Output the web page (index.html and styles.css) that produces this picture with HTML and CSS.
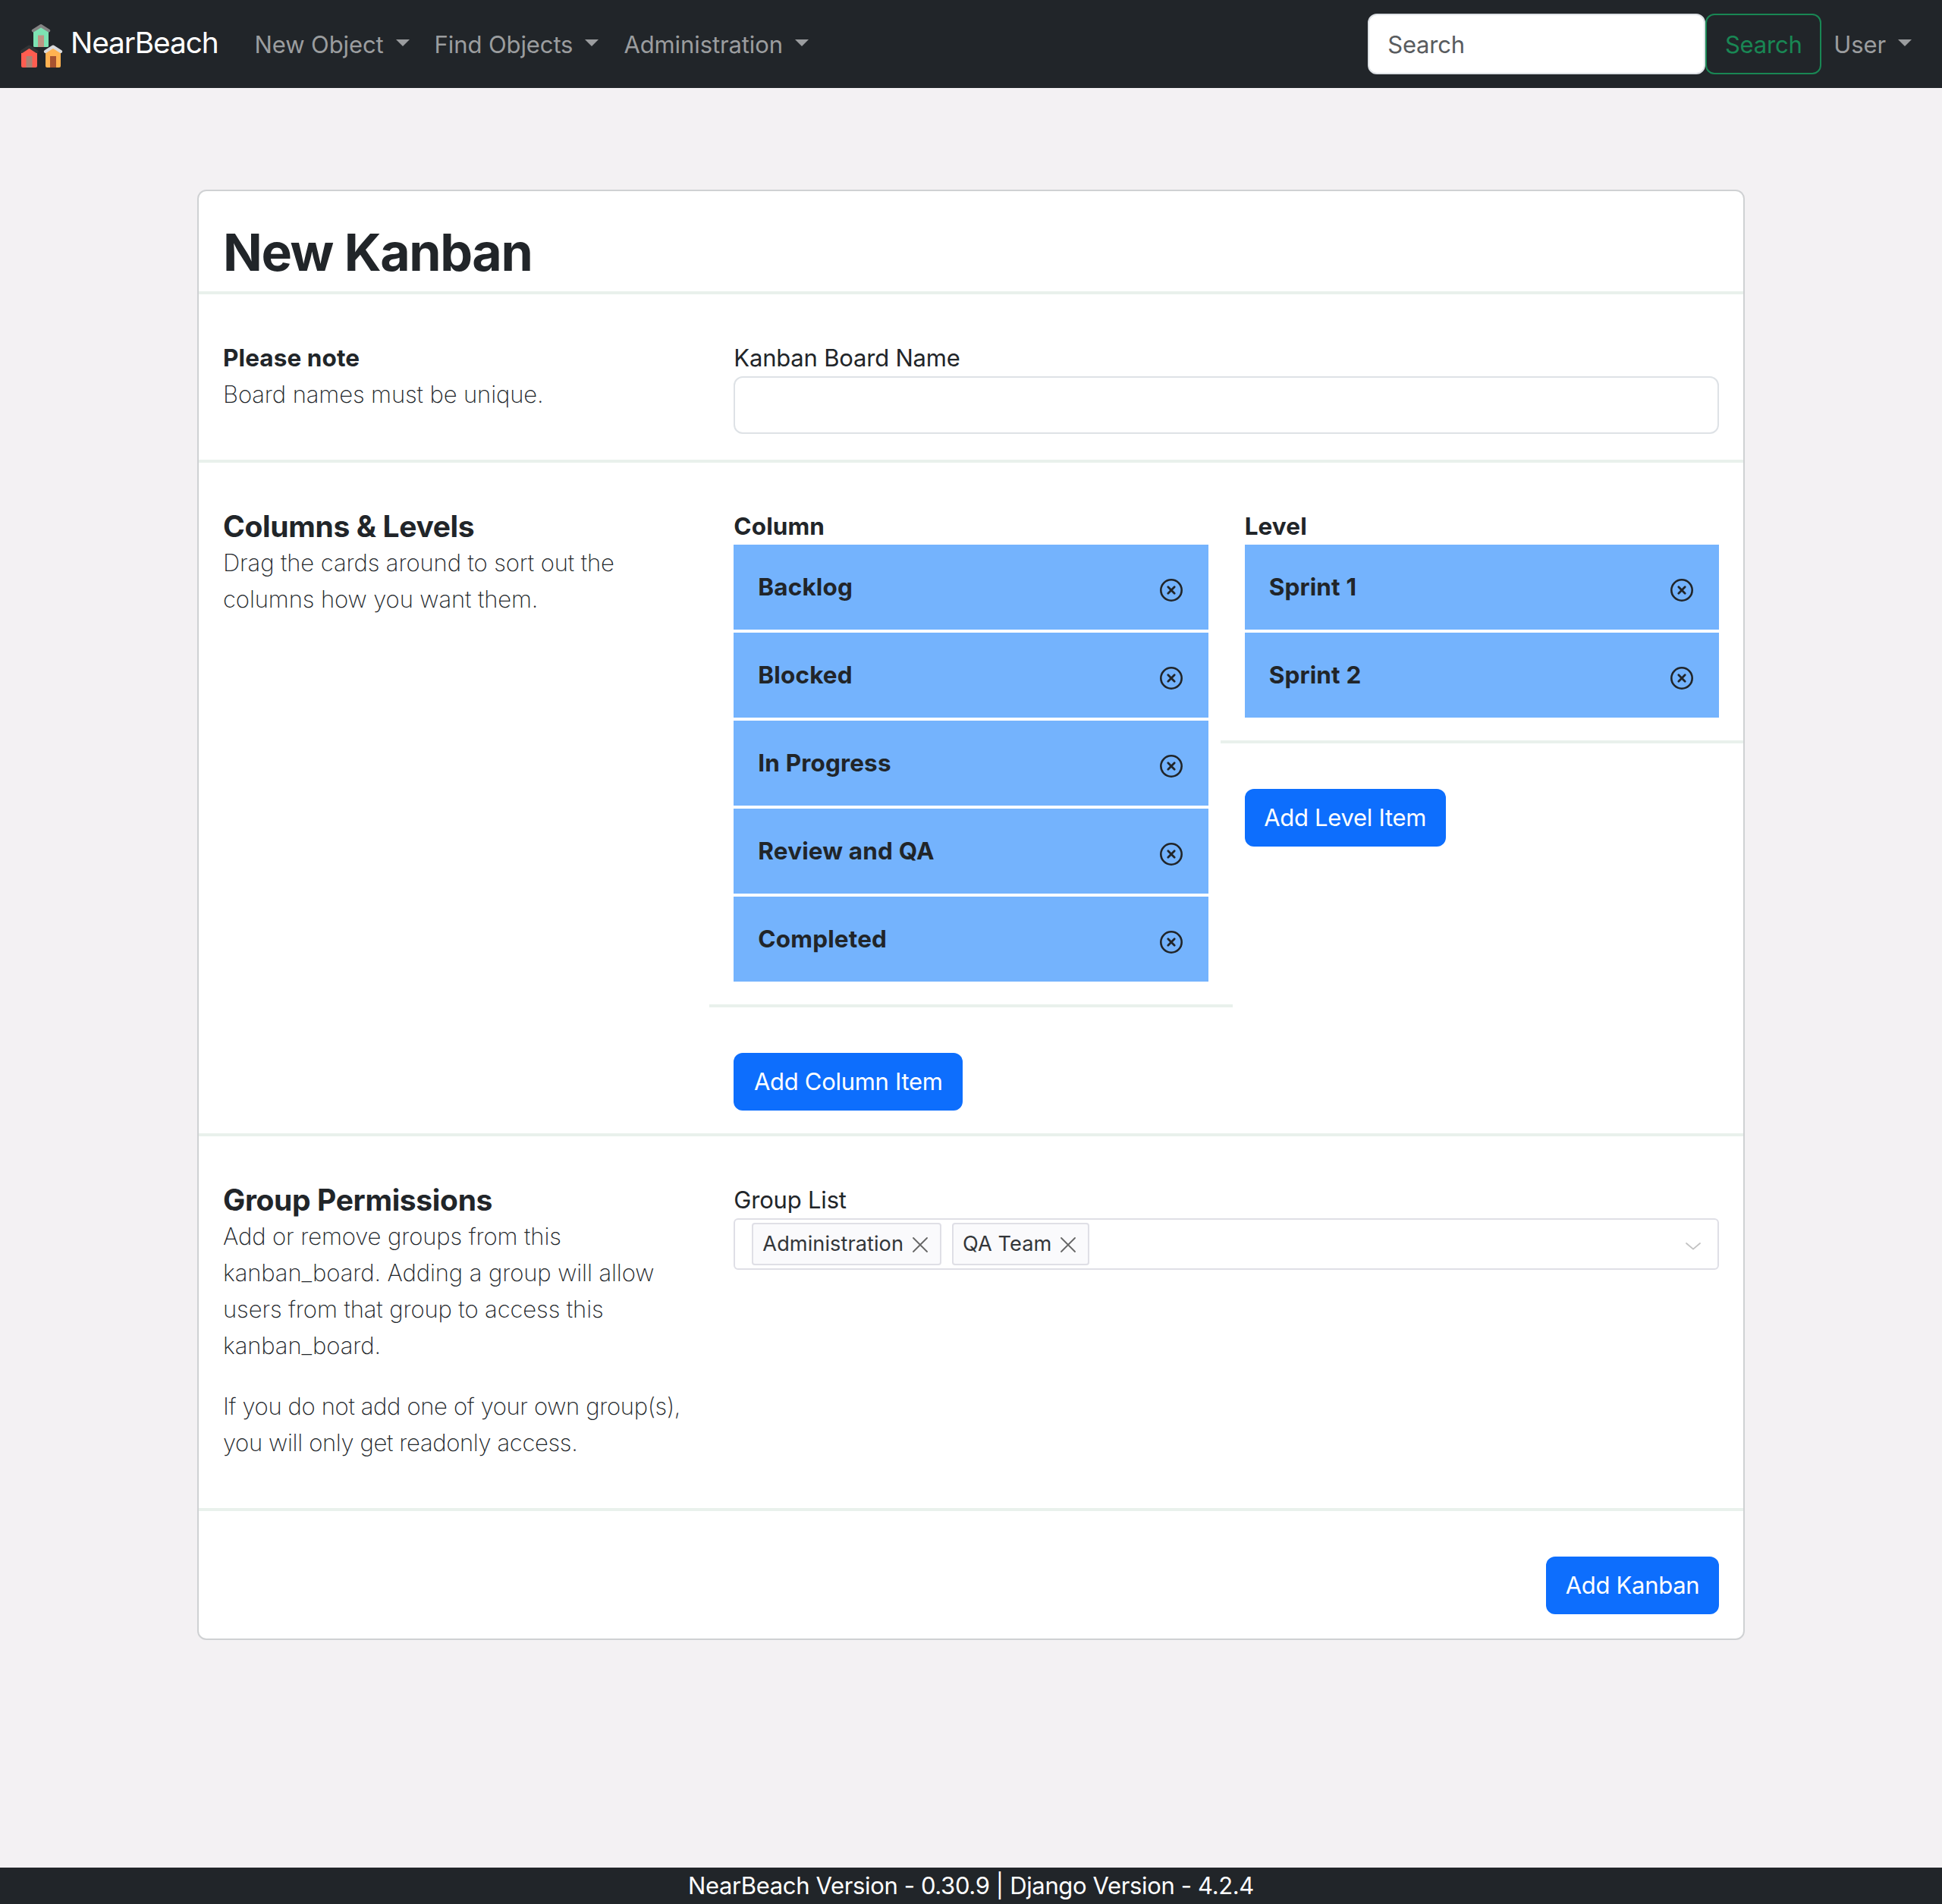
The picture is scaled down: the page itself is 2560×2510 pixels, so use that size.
FILE: index.html
```html
<!DOCTYPE html>
<html lang="en">
<head>
<meta charset="utf-8">
<title>New Kanban | NearBeach</title>
<link rel="stylesheet" href="styles.css">
</head>
<body>
<svg class="sprite" aria-hidden="true">
  <symbol id="remove" viewBox="0 0 32 32">
    <circle cx="16" cy="16" r="13.7" fill="none" stroke="currentColor" stroke-width="2.6"/>
    <path d="M11.8 11.8 20.2 20.2M20.2 11.8 11.8 20.2" fill="none" stroke="currentColor" stroke-width="2.8" stroke-linecap="round"/>
  </symbol>
  <symbol id="cross" viewBox="0 0 20 20">
    <path d="M1 1 19 19M19 1 1 19" fill="none" stroke="currentColor" stroke-width="1.8" stroke-linecap="round"/>
  </symbol>
</svg>

<header class="navbar">
  <a class="brand">
    <svg class="logo" viewBox="0 0 56 58" aria-hidden="true">
      <path d="M17 9 27 2 37 9V28.5Q37 30 35.500 30H18.500Q17 30 17 28.500Z" fill="#7de3b3"/>
      <rect x="23" y="14.500" width="8" height="15.500" fill="#be9483"/>
      <path d="M16.800 8.400 27 2 37.200 8.400" fill="none" stroke="#858484" stroke-width="4" stroke-linecap="round" stroke-linejoin="round"/>
      <path d="M1 37 11 30 22 37V55Q22 57 20 57H3Q1 57 1 55Z" fill="#ff5d50"/>
      <rect x="7.500" y="42" width="8" height="15" fill="#a98475"/>
      <path d="M1.600 36 11.500 29.500 21.600 36" fill="none" stroke="#333435" stroke-width="4" stroke-linecap="round" stroke-linejoin="round"/>
      <path d="M33 37 43 30 53 37V55Q53 57 51 57H35Q33 57 33 55Z" fill="#ffb251"/>
      <rect x="39" y="42" width="8" height="15" fill="#a75230"/>
      <path d="M32.800 36 43 29.500 53.200 36" fill="none" stroke="#d9dadc" stroke-width="4" stroke-linecap="round" stroke-linejoin="round"/>
    </svg>
    <span class="brand-name">NearBeach</span>
  </a>
  <nav class="menu">
    <a class="menu-item">New Object<i class="caret"></i></a>
    <a class="menu-item">Find Objects<i class="caret"></i></a>
    <a class="menu-item">Administration<i class="caret"></i></a>
  </nav>
  <form class="search">
    <input class="search-input" type="text" placeholder="Search">
    <button class="search-button" type="button">Search</button>
  </form>
  <a class="menu-item user">User<i class="caret"></i></a>
</header>

<main class="card">
  <h1 class="title">New Kanban</h1>

  <section class="section">
    <div class="intro">
      <h3 class="label strong">Please note</h3>
      <p class="note">Board names must be unique.</p>
    </div>
    <div class="wide">
      <label class="label" for="board">Kanban Board Name</label>
      <input class="text-input" id="board" type="text">
    </div>
  </section>

  <section class="section">
    <div class="intro">
      <h2 class="heading">Columns &amp; Levels</h2>
      <p class="note">Drag the cards around to sort out the columns how you want them.</p>
    </div>
    <div class="stack">
      <h3 class="label strong">Column</h3>
      <ul class="tiles">
        <li class="tile">Backlog<svg class="remove"><use href="#remove"/></svg></li>
        <li class="tile">Blocked<svg class="remove"><use href="#remove"/></svg></li>
        <li class="tile">In Progress<svg class="remove"><use href="#remove"/></svg></li>
        <li class="tile">Review and QA<svg class="remove"><use href="#remove"/></svg></li>
        <li class="tile">Completed<svg class="remove"><use href="#remove"/></svg></li>
      </ul>
      <hr class="rule">
      <button class="button add-column" type="button">Add Column Item</button>
    </div>
    <div class="stack">
      <h3 class="label strong">Level</h3>
      <ul class="tiles">
        <li class="tile">Sprint 1<svg class="remove"><use href="#remove"/></svg></li>
        <li class="tile">Sprint 2<svg class="remove"><use href="#remove"/></svg></li>
      </ul>
      <hr class="rule">
      <button class="button add-level" type="button">Add Level Item</button>
    </div>
  </section>

  <section class="section">
    <div class="intro">
      <h2 class="heading">Group Permissions</h2>
      <p class="note">Add or remove groups from this kanban_board. Adding a group will allow users from that group to access this kanban_board.</p>
      <p class="note tight">If you do not add one of your own group(s), you will only get readonly access.</p>
    </div>
    <div class="wide">
      <div class="label">Group List</div>
      <div class="select">
        <span class="tag">Administration<svg class="cross"><use href="#cross"/></svg></span>
        <span class="tag">QA Team<svg class="cross"><use href="#cross"/></svg></span>
        <svg class="chevron" viewBox="0 0 20 10"><path d="M1 1 10 8.600 19 1" fill="none" stroke="#c2c2c2" stroke-width="1.800" stroke-linecap="round"/></svg>
      </div>
    </div>
  </section>

  <div class="actions">
    <button class="button add-kanban" type="button">Add Kanban</button>
  </div>
</main>

<footer class="footer">NearBeach Version - 0.30.9 | Django Version - 4.2.4</footer>
</body>
</html>
```

FILE: styles.css
```css
* { box-sizing: border-box; }

body {
  margin: 0;
  min-height: 2510px;
  display: flex;
  flex-direction: column;
  background: #f3f1f3;
  color: #212529;
  font: 400 31px/48px Inter, "Liberation Sans", sans-serif;
  letter-spacing: -0.2px;
}

h1, h2, h3, p, ul { margin: 0; padding: 0; }
ul { list-style: none; }
input, button { font: inherit; letter-spacing: inherit; }
.sprite { display: none; }

/* Top bar */
.navbar {
  height: 116px;
  padding: 0 40px 0 27px;
  display: flex;
  align-items: center;
  background: #212529;
}
.brand { display: flex; align-items: center; }
.logo { width: 56px; height: 58px; margin-top: 5px; }
.brand-name {
  width: 194px;
  margin: -5px 0 0 10px;
  color: #fff;
  font-size: 38.8px;
  letter-spacing: -1.1px;
}
.menu { display: flex; gap: 33px; margin-left: 48.5px; }
.menu-item {
  display: flex;
  align-items: center;
  padding-top: 1px;
  color: #9b9d9f;
  letter-spacing: -0.1px;
}
.caret {
  margin: -4px 0 0 16px;
  border: 9px solid transparent;
  border-top-color: currentColor;
  border-bottom: 0;
}
.search { display: flex; margin-left: auto; }
.search-input {
  width: 445px;
  height: 80px;
  padding: 1px 24px 0;
  border: 2px solid #dee2e6;
  border-radius: 12px;
  background: #fff;
}
.search-input::placeholder { color: #595c5f; opacity: 1; }
.search-button {
  width: 153px;
  height: 80px;
  padding: 1px 0 0;
  border: 2px solid #198754;
  border-radius: 12px;
  background: none;
  color: #198754;
}
.user { margin-left: 16px; }

/* Card */
.card {
  width: 2040px;
  margin: 134px auto 0;
  border: 2px solid #cfd1d3;
  border-radius: 12px;
  background: #fff;
}
.title {
  height: 136px;
  padding: 38px 32px 0;
  border-bottom: 4px solid #e9f1ec;
  font-size: 68px;
  line-height: 84px;
  font-weight: 700;
  letter-spacing: -1.4px;
}
.section {
  display: grid;
  grid-template-columns: repeat(3, 1fr);
  column-gap: 48px;
  padding: 60px 32px 30px;
  border-bottom: 4px solid #e9f1ec;
}
.wide { grid-column: span 2; }
.label { display: block; font-size: 31px; font-weight: 400; }
.strong { font-size: 31.5px; font-weight: 700; letter-spacing: 0.1px; }
.heading { font-size: 39px; line-height: 48px; font-weight: 700; letter-spacing: -0.35px; }
.note {
  margin-bottom: 32px;
  color: #212529;
  font-weight: 200;
  letter-spacing: -0.1px;
}
.tight { letter-spacing: -0.35px; }
.text-input {
  display: block;
  width: 100%;
  height: 76px;
  border: 2px solid #dee2e6;
  border-radius: 12px;
  background: #fff;
}

/* Sortable tiles */
.tiles { display: grid; gap: 4px; }
.tile {
  height: 112px;
  padding: 0 33px 0 32px;
  display: flex;
  align-items: center;
  justify-content: space-between;
  background: #74b3fd;
  font-size: 31.5px;
  font-weight: 700;
  letter-spacing: 0.15px;
}
.remove { width: 32px; height: 32px; margin-top: 8px; }
.rule {
  height: 4px;
  margin: 30px -32px 60px;
  border: 0;
  background: #e9f1ec;
}
.button {
  display: block;
  height: 76px;
  padding: 0;
  border: 0;
  border-radius: 12px;
  background: #0d6efd;
  color: #fff;
  letter-spacing: -0.3px;
}
.add-column { width: 302px; }
.add-level { width: 265px; }
.add-kanban { width: 228px; }

/* Group select */
.select {
  height: 68px;
  padding: 0 22px;
  display: flex;
  align-items: center;
  gap: 14px;
  border: 2px solid #dfdfe6;
  border-radius: 6px;
}
.tag {
  height: 56px;
  padding: 0 16px 0 12px;
  display: flex;
  align-items: center;
  gap: 12px;
  border: 2px solid #dfdfe6;
  border-radius: 4px;
  background: #fafafc;
  color: #333639;
  font-size: 27.2px;
  letter-spacing: 0.05px;
}
.cross { width: 20px; height: 20px; margin-top: 2px; color: #666; }
.chevron { width: 20px; height: 10px; margin: 6px 0 0 auto; }

.actions {
  padding: 60px 32px 32px;
  display: flex;
  justify-content: flex-end;
}

.footer {
  height: 48px;
  margin-top: auto;
  background: #212529;
  color: #fff;
  text-align: center;
  letter-spacing: -0.36px;
}
```
